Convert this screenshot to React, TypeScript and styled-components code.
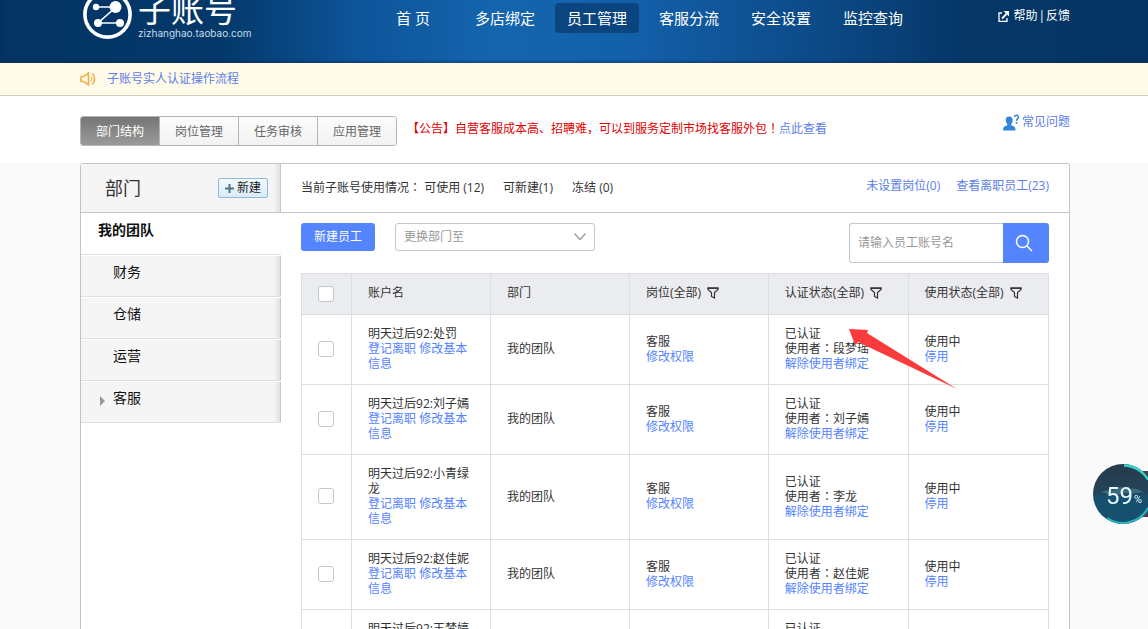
import React from 'react';
import styled, { createGlobalStyle } from 'styled-components';

const GlobalStyle = createGlobalStyle`
  *, *::before, *::after { box-sizing: border-box; }
  body {
    margin: 0;
    background: #fafafa;
    color: #333;
    font-family: 'Open Sans', 'Noto Sans CJK SC', sans-serif;
    font-size: 12px;
    line-height: 16px;
  }
  a { color: #5c7ee6; text-decoration: none; }
  button, input, select { font: inherit; }
  button { cursor: pointer; }
`;

const Page = styled.div`
  height: 100vh;
  overflow: hidden;
`;

/* Full-width punctuation centred in its square */
const Mark = styled.span`
  font-family: 'Noto Sans CJK TC', sans-serif;
  line-height: 1;
`;

const Header = styled.header`
  display: flex;
  align-items: flex-start;
  height: 63px;
  padding: 0 78px 0 80px;
  overflow: hidden;
  background: linear-gradient(90deg, #033463 0%, #033869 19%, #0d5499 31%, #1465ae 43%, #1360aa 55%, #0c4a88 71%, #053768 84%, #033463 100%);
  box-shadow: inset 0 -2px 2px rgba(20, 40, 80, 0.4);
`;

const Brand = styled.a`
  display: flex;
  flex: 0 0 291px;
  gap: 5px;
  margin-top: -10px;
  padding-left: 3px;
  color: #fff;
`;

const BrandText = styled.span`
  display: flex;
  flex-direction: column;
`;

const BrandName = styled.span`
  font-family: 'Noto Sans CJK SC', sans-serif;
  font-size: 33px;
  font-weight: 400;
  line-height: 36px;
`;

const BrandUrl = styled.span`
  font-family: Inter, 'Liberation Sans', sans-serif;
  font-size: 10px;
  line-height: 14px;
  color: #c9dcef;
`;

const Nav = styled.nav`
  display: flex;
  gap: 8px;
  padding-top: 3px;
`;

const NavLink = styled.a<{ $active?: boolean }>`
  width: 84px;
  border-radius: 4px;
  background: ${(p) => (p.$active ? '#0b4580' : 'transparent')};
  color: #fff;
  font-size: 15px;
  line-height: 30px;
  text-align: center;
  white-space: nowrap;
`;

const HelpLinks = styled.div`
  display: flex;
  align-items: center;
  gap: 1px;
  margin-left: auto;
  padding-top: 8px;
  color: #fff;
  a { color: #fff; }
  svg { margin-right: 3px; }
`;

const Notice = styled.div`
  display: flex;
  align-items: center;
  gap: 11px;
  height: 33px;
  padding: 0 80px;
  border-bottom: 1px solid #d3cfb9;
  background: #fffbeb;
`;

const TopBar = styled.div`
  display: flex;
  height: 67px;
  padding: 20px 78px 0 80px;
  background: #fff;
`;

const Tabs = styled.div`
  display: flex;
  height: 30px;
  border: 1px solid #b4b4b4;
  border-radius: 3px;
  overflow: hidden;
`;

const Tab = styled.button<{ $active?: boolean }>`
  width: 79px;
  padding: 2px 0 0;
  border: 0;
  border-right: 1px solid #b4b4b4;
  background: ${(p) => (p.$active ? 'linear-gradient(#757575, #9a9a9a)' : 'linear-gradient(#fcfcfc, #f2f2f2)')};
  color: ${(p) => (p.$active ? '#fff' : '#666')};
  &:last-child { width: 78px; border-right: 0; }
`;

const Announcement = styled.p`
  margin: 5px 0 0 10px;
  color: #e00000;
`;

const Faq = styled.a`
  display: flex;
  align-items: flex-start;
  gap: 2px;
  margin: -2px 0 0 auto;
`;

const Main = styled.main`
  padding: 0 78px 0 80px;
`;

const Panel = styled.section`
  display: grid;
  grid-template-columns: 200px 1fr;
  grid-template-rows: 49px auto;
  border: 1px solid #c4c4c8;
  border-radius: 3px 3px 0 0;
  background: #fff;
`;

const sideShade = 'linear-gradient(90deg, #f5f5f5 0, #f5f5f5 193px, #e0e0e0 199px, #c8c8c8 199px)';

const DeptHead = styled.div`
  display: flex;
  align-items: center;
  justify-content: space-between;
  padding: 0 13px 0 24px;
  border-bottom: 1px solid #c4c4c8;
  background: ${sideShade};
`;

const DeptTitle = styled.h2`
  margin: 0;
  font-size: 18px;
  font-weight: 400;
  line-height: 24px;
`;

const AddButton = styled.button`
  display: flex;
  align-items: center;
  justify-content: center;
  gap: 3px;
  width: 50px;
  height: 20px;
  padding: 0;
  border: 1px solid #8fbbd6;
  border-radius: 2px;
  background: linear-gradient(#f4fafe, #d9ecf8);
  color: #222;
`;

const Summary = styled.div`
  display: flex;
  align-items: center;
  gap: 19px;
  padding: 0 20px;
  border-bottom: 1px solid #c4c4c8;
`;

const SummaryLinks = styled.div`
  display: flex;
  gap: 16px;
  margin: 0 0 4px auto;
`;

const Sidebar = styled.ul`
  margin: 0;
  padding: 0;
  list-style: none;
`;

const Team = styled.li<{ $root?: boolean }>`
  display: flex;
  align-items: center;
  gap: 8px;
  height: 42px;
  padding: 0 0 8px ${(p) => (p.$root ? 17 : 19)}px;
  border-bottom: 1px solid #e0e0e0;
  background: ${(p) => (p.$root ? '#fff' : sideShade)};
  box-shadow: inset 0 1px #fff;
  font-size: 14px;
  line-height: 20px;
  font-weight: ${(p) => (p.$root ? 700 : 400)};
  a { color: #111; }
`;

const Marker = styled.span`
  width: 5px;
  height: 10px;
  margin-top: 6px;
  svg { display: block; }
`;

const Content = styled.div`
  padding: 10px 20px 0;
`;

const Toolbar = styled.div`
  display: flex;
  align-items: flex-start;
  height: 50px;
`;

const PrimaryButton = styled.button`
  width: 74px;
  height: 28px;
  padding: 0;
  border: 0;
  border-radius: 3px;
  background: #5584ff;
  color: #fff;
`;

const SelectBox = styled.label`
  position: relative;
  margin-left: 20px;
  svg { position: absolute; right: 9px; top: 10px; pointer-events: none; }
`;

const Select = styled.select`
  display: block;
  width: 200px;
  height: 28px;
  padding: 0 8px;
  border: 1px solid #c4c6cf;
  border-radius: 3px;
  background: #fff;
  color: #999;
  appearance: none;
`;

const Search = styled.form`
  display: flex;
  width: 200px;
  height: 40px;
  margin-left: auto;
`;

const SearchInput = styled.input`
  flex: 1;
  min-width: 0;
  padding: 0 8px;
  border: 1px solid #c4c6cf;
  border-right: 0;
  border-radius: 3px 0 0 3px;
  color: #333;
  &::placeholder { color: #999; opacity: 1; }
`;

const SearchButton = styled.button`
  display: flex;
  align-items: center;
  justify-content: center;
  width: 46px;
  padding: 0 4px 0 0;
  border: 0;
  border-radius: 0 3px 3px 0;
  background: #5584ff;
`;

const TableArea = styled.div`
  position: relative;
`;

const StaffTable = styled.table`
  width: 100%;
  border-collapse: collapse;
  table-layout: fixed;
  line-height: 15px;
`;

const Col = styled.col<{ $share: number }>`
  width: ${(p) => p.$share}%;
`;

const HeadCell = styled.th`
  height: 41px;
  padding: 0 16px 4px;
  border: 1px solid #dcdee3;
  background: #ebecf0;
  font-weight: 400;
  text-align: left;
  white-space: nowrap;
  svg { margin-left: 6px; vertical-align: -2px; }
  &:first-child { padding-bottom: 0; }
`;

const Cell = styled.td`
  padding: 11px 16px 13px;
  border: 1px solid #dcdee3;
  a { color: #5584ff; }
`;

const Line = styled.div``;

const Check = styled.input`
  display: block;
  width: 16px;
  height: 16px;
  margin: 0;
  border: 1px solid #c4c6cf;
  border-radius: 3px;
  background: #fff;
  appearance: none;
`;

const Arrow = styled.svg`
  position: absolute;
  top: 55px;
  right: 92px;
  pointer-events: none;
`;

const Gauge = styled.svg`
  position: fixed;
  top: 462px;
  right: 0;
`;

const LogoMark = () => (
  <svg width="50" height="50" viewBox="0 0 50 50" fill="none" stroke="#fff">
    <circle cx="24.500" cy="24.500" r="22.600" strokeWidth="3.6" />
    <path d="M13 17h20L15 33h22" strokeWidth="1.6" />
    <g fill="#fff" stroke="none">
      <circle cx="13" cy="17" r="3.2" />
      <circle cx="32.500" cy="17" r="6" />
      <circle cx="15" cy="33" r="4" />
      <circle cx="37" cy="33" r="4" />
    </g>
  </svg>
);

const ExternalIcon = () => (
  <svg width="11" height="11" viewBox="0 0 11 11" fill="none" stroke="#fff">
    <path d="M4 2H1v8.400h8V7" strokeWidth="1.300" />
    <path d="M4 7.500L8.500 3" strokeWidth="1.800" />
    <path d="M5.500 0H11v5.500z" fill="#fff" stroke="none" />
  </svg>
);

const SpeakerIcon = () => (
  <svg width="16" height="14" viewBox="0 0 16 14" fill="none" stroke="#eeb34e" strokeWidth="1.700">
    <path d="M1 4.500h3L8.500 1v12L4 9.500H1z" />
    <path d="M11 4.500q1.500 2.500 0 5" strokeWidth="1.200" />
    <path d="M12.500 1.500q4 5.500 0 11" />
  </svg>
);

const FaqIcon = () => (
  <svg width="17" height="17" viewBox="0 0 17 17">
    <path d="M6 2.500c-2.400 0-3.400 1.600-3.200 3.800.1 1.700.7 2.900 1.500 3.700v1.300L1 12.800Q0 13.400 0 16.500h12.500q0-3.100-1-3.700l-3.300-1.500V10c.8-.8 1.400-2 1.500-3.700.1-2.200-1.200-3.800-3.700-3.800z" fill="#2f86dc" />
    <path d="M11.500 3q.2-1.800 2-1.800T15.500 3q0 1.100-1 1.900t-1 2.100" fill="none" stroke="#2f86dc" strokeWidth="1.500" />
    <path d="M12.700 8h1.700v1.700h-1.700z" fill="#2f86dc" />
  </svg>
);

const FilterIcon = () => (
  <svg width="12" height="12" viewBox="0 0 12 12" fill="none" stroke="#333" strokeWidth="1.200">
    <path d="M1 1h10v1.500L7.500 5.500v5.500L4.500 9.500V5.500L1 2.500z" />
    <path d="M.5 1.200h11" strokeWidth="1.500" />
  </svg>
);

const navItems = ['首 页', '多店绑定', '员工管理', '客服分流', '安全设置', '监控查询'];
const tabs = ['部门结构', '岗位管理', '任务审核', '应用管理'];
const teams = ['财务', '仓储', '运营', '客服'];
const columnShares = [6.7, 18.6, 18.6, 18.6, 18.7, 18.8];
const staff = [
  { account: '处罚', user: '段梦瑶' },
  { account: '刘子嫣', user: '刘子嫣' },
  { account: '小青绿龙', user: '李龙' },
  { account: '赵佳妮', user: '赵佳妮' },
  { account: '王梦婷', user: '王梦婷' },
];

export default function App() {
  return (
    <Page>
      <GlobalStyle />
      <Header>
        <Brand href="#">
          <LogoMark />
          <BrandText>
            <BrandName>子账号</BrandName>
            <BrandUrl>zizhanghao.taobao.com</BrandUrl>
          </BrandText>
        </Brand>
        <Nav>
          {navItems.map((item) => (
            <NavLink href="#" key={item} $active={item === '员工管理'}>{item}</NavLink>
          ))}
        </Nav>
        <HelpLinks>
          <ExternalIcon />
          <a href="#">帮助</a>
          <span>|</span>
          <a href="#">反馈</a>
        </HelpLinks>
      </Header>

      <Notice>
        <SpeakerIcon />
        <a href="#">子账号实人认证操作流程</a>
      </Notice>

      <TopBar>
        <Tabs>
          {tabs.map((tab, i) => (
            <Tab type="button" key={tab} $active={i === 0}>{tab}</Tab>
          ))}
        </Tabs>
        <Announcement>
          【公告】自营客服成本高、招聘难，可以到服务定制市场找客服外包<Mark>！</Mark><a href="#">点此查看</a>
        </Announcement>
        <Faq href="#"><FaqIcon />常见问题</Faq>
      </TopBar>

      <Main>
        <Panel>
          <DeptHead>
            <DeptTitle>部门</DeptTitle>
            <AddButton type="button">
              <svg width="9" height="9" viewBox="0 0 9 9" stroke="#4f7389" strokeWidth="2">
                <path d="M4.500 0v9M0 4.500h9" />
              </svg>
              新建
            </AddButton>
          </DeptHead>
          <Summary>
            <span>当前子账号使用情况<Mark>：</Mark> 可使用 (12)</span>
            <span>可新建(1)</span>
            <span>冻结 (0)</span>
            <SummaryLinks>
              <a href="#">未设置岗位(0)</a>
              <a href="#">查看离职员工(23)</a>
            </SummaryLinks>
          </Summary>

          <Sidebar>
            <Team $root><a href="#">我的团队</a></Team>
            {teams.map((team) => (
              <Team key={team}>
                <Marker>
                  {team === '客服' && (
                    <svg width="5" height="10" viewBox="0 0 5 10"><path d="M0 0l5 5-5 5z" fill="#999" /></svg>
                  )}
                </Marker>
                <a href="#">{team}</a>
              </Team>
            ))}
          </Sidebar>

          <Content>
            <Toolbar>
              <PrimaryButton type="button">新建员工</PrimaryButton>
              <SelectBox>
                <Select aria-label="更换部门至" defaultValue="">
                  <option value="">更换部门至</option>
                  {teams.map((team) => <option key={team}>{team}</option>)}
                </Select>
                <svg width="12" height="8" viewBox="0 0 12 8" fill="none" stroke="#999" strokeWidth="1.200">
                  <path d="M.5 .5L6 6.500 11.500 .5" />
                </svg>
              </SelectBox>
              <Search>
                <SearchInput type="text" aria-label="员工账号名" placeholder="请输入员工账号名" />
                <SearchButton type="button" aria-label="搜索">
                  <svg width="18" height="18" viewBox="0 0 18 18" fill="none" stroke="#fff" strokeWidth="1.500">
                    <circle cx="7.500" cy="7.500" r="6" />
                    <path d="M12 12l5 5" />
                  </svg>
                </SearchButton>
              </Search>
            </Toolbar>

            <TableArea>
              <StaffTable>
                <colgroup>
                  {columnShares.map((share, i) => <Col key={i} $share={share} />)}
                </colgroup>
                <thead>
                  <tr>
                    <HeadCell><Check type="checkbox" aria-label="全选" /></HeadCell>
                    <HeadCell>账户名</HeadCell>
                    <HeadCell>部门</HeadCell>
                    <HeadCell>岗位(全部)<FilterIcon /></HeadCell>
                    <HeadCell>认证状态(全部)<FilterIcon /></HeadCell>
                    <HeadCell>使用状态(全部)<FilterIcon /></HeadCell>
                  </tr>
                </thead>
                <tbody>
                  {staff.map(({ account, user }) => (
                    <tr key={account}>
                      <Cell><Check type="checkbox" aria-label={`选择${account}`} /></Cell>
                      <Cell>
                        <Line>明天过后92:{account}</Line>
                        <a href="#">登记离职</a> <a href="#">修改基本信息</a>
                      </Cell>
                      <Cell>我的团队</Cell>
                      <Cell>
                        <Line>客服</Line>
                        <a href="#">修改权限</a>
                      </Cell>
                      <Cell>
                        <Line>已认证</Line>
                        <Line>使用者<Mark>：</Mark>{user}</Line>
                        <a href="#">解除使用者绑定</a>
                      </Cell>
                      <Cell>
                        <Line>使用中</Line>
                        <a href="#">停用</a>
                      </Cell>
                    </tr>
                  ))}
                </tbody>
              </StaffTable>
              <Arrow width="109" height="62" viewBox="0 0 109 62">
                <path d="M1 1l19 1-1 3 90 56-99-47-3 3z" fill="#fb3b3b" />
              </Arrow>
            </TableArea>
          </Content>
        </Panel>
      </Main>

      <Gauge width="57" height="66" viewBox="0 0 57 66">
        <defs>
          <linearGradient id="sea" x1="0" y1="0" x2="0" y2="1">
            <stop offset="0" stopColor="#263a4c" />
            <stop offset=".5" stopColor="#24445a" />
            <stop offset=".52" stopColor="#17506d" />
            <stop offset="1" stopColor="#15506f" />
          </linearGradient>
        </defs>
        <path d="M48 9h9v46h-9z" fill="#43404f" />
        <circle cx="32" cy="32" r="30" fill="url(#sea)" />
        <path d="M10 30q8-3 12-2 6-5 14-1 10-2 16 3-8 2-16 1-14 4-26-1z" fill="#3a6b7c" />
        <path d="M33 3.500a28.500 28.500 0 0 1 24 14" fill="none" stroke="#35d3c7" strokeWidth="2.500" />
        <path d="M57 46a28.500 28.500 0 0 1-41 10" fill="none" stroke="#28b6c4" strokeWidth="2" />
        <text x="15" y="42" fill="#e6fbff" fontFamily="Roboto, sans-serif" fontSize="24">59</text>
        <text x="43" y="41" fill="#e6fbff" fontFamily="Roboto, sans-serif" fontSize="11">%</text>
      </Gauge>
    </Page>
  );
}
